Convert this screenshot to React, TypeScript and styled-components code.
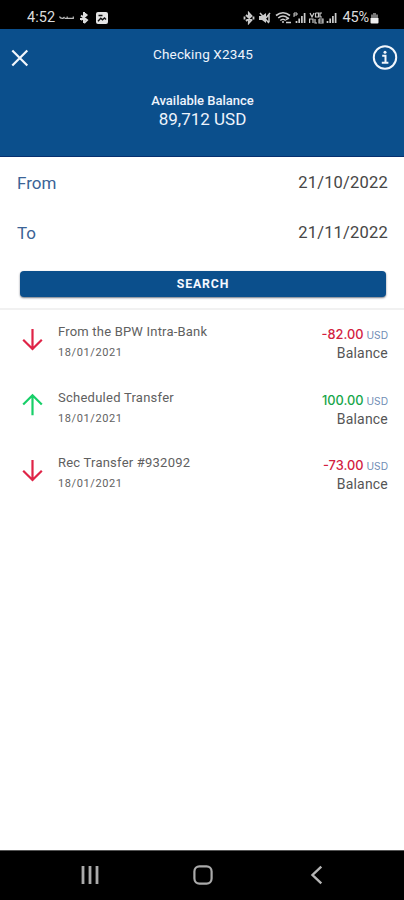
import React from "react";
import styled, { createGlobalStyle } from "styled-components";

const Global = createGlobalStyle`
  * { box-sizing: border-box; }
  body { margin: 0; background: #fff; font-family: Roboto, "Liberation Sans", sans-serif; }
`;

const Screen = styled.div`
  width: 404px;
  height: 900px;
  display: flex;
  flex-direction: column;
  overflow: hidden;
  background: #fff;
`;

const StatusBar = styled.div`
  height: 29px;
  flex: none;
  display: flex;
  justify-content: space-between;
  padding: 7px 25px 0 27px;
  background: #000;
  color: #dcdcdc;
`;

const StatusGroup = styled.div`
  display: flex;
  align-items: center;
  height: 21px;
`;

const StatusText = styled.span<{ $spacing: number }>`
  font-size: 14.5px;
  line-height: 20px;
  letter-spacing: ${(p) => p.$spacing}px;
`;

const Icon = styled.svg<{ $left?: number }>`
  display: block;
  flex: none;
  margin-left: ${(p) => p.$left ?? 0}px;
`;

const Header = styled.header`
  height: 128px;
  flex: none;
  background: #0b4f8c;
  border-bottom: 1px solid #06306f;
  color: #eef4fc;
`;

const TitleRow = styled.div`
  height: 58px;
  display: flex;
  justify-content: space-between;
  padding: 0 6px 0 11px;
`;

const IconButton = styled.button<{ $top: number }>`
  height: 26px;
  margin: ${(p) => p.$top}px 0 0;
  padding: 0;
  border: 0;
  background: none;
  color: inherit;
`;

const Title = styled.h1`
  margin: 15px 0 0 5px;
  font-size: 13.5px;
  line-height: 20px;
  font-weight: 400;
  letter-spacing: 0.15px;
`;

const BalanceBlock = styled.div`
  display: flex;
  flex-direction: column;
  align-items: center;
  padding: 5px 0 0 1px;
`;

const BalanceLabel = styled.div`
  font-size: 13px;
  line-height: 18px;
  font-weight: 500;
`;

const BalanceValue = styled.div`
  font-size: 17px;
  line-height: 19px;
`;

const Filters = styled.section`
  height: 153px;
  flex: none;
  padding-top: 1px;
  border-bottom: 2px solid #f1f1f1;
`;

const DateRow = styled.div`
  height: 50.5px;
  display: flex;
  align-items: center;
  justify-content: space-between;
  padding: 0 16px 0 17px;
`;

const DateLabel = styled.span`
  font-size: 17px;
  line-height: 20px;
  padding-bottom: 1px;
  color: #3b6396;
`;

const DateValue = styled.span`
  font-size: 16.5px;
  line-height: 20px;
  letter-spacing: 0.2px;
  padding-bottom: 1px;
  color: #464646;
`;

const SearchButton = styled.button`
  display: block;
  width: 366px;
  height: 26px;
  margin: 12px 0 0 20px;
  padding: 0 0 1px;
  border: 0;
  border-radius: 4px;
  background: #0b4f8c;
  box-shadow: 0 1px 2px rgba(20, 30, 50, 0.6);
  color: #f4f8ff;
  font: 700 12.3px/20px Roboto, sans-serif;
  letter-spacing: 0.85px;
`;

const List = styled.main`
  flex: 1;
  padding-top: 11px;
`;

const Row = styled.div`
  height: 65.5px;
  display: flex;
  padding: 0 16px 0 22px;
`;

const Details = styled.div`
  flex: 1;
  margin-left: 15px;
`;

const Name = styled.div<{ $spacing: number }>`
  font-size: 13px;
  line-height: 22px;
  letter-spacing: ${(p) => p.$spacing}px;
  color: #606060;
`;

const Posted = styled.div`
  font-size: 11px;
  line-height: 20px;
  letter-spacing: 0.6px;
  color: #626262;
`;

const Figures = styled.div`
  padding-top: 5px;
  text-align: right;
`;

const Amount = styled.div<{ $credit: boolean }>`
  height: 18px;
  font-family: Inter, Roboto, sans-serif;
  font-size: 12.8px;
  line-height: 18px;
  font-weight: 500;
  color: ${(p) => (p.$credit ? "#18a64a" : "#d3213f")};
`;

const Currency = styled.span`
  margin-left: 3px;
  font-size: 10.2px;
  font-weight: 400;
  color: #6f8db5;
`;

const BalanceNote = styled.div`
  font-size: 14px;
  line-height: 18px;
  letter-spacing: 0.2px;
  color: #555;
`;

const NavBar = styled.nav`
  height: 50px;
  flex: none;
  display: flex;
  align-items: center;
  justify-content: space-between;
  padding: 0 81px 2px 80px;
  border-top: 1px solid #555;
  background: #000;
`;

const HomeIcon = styled(Icon)`
  margin-right: 5px;
`;

interface Transaction {
  name: string;
  date: string;
  amount: string;
  credit: boolean;
  spacing: number;
}

const transactions: Transaction[] = [
  { name: "From the BPW Intra-Bank", date: "18/01/2021", amount: "-82.00", credit: false, spacing: 0.2 },
  { name: "Scheduled Transfer", date: "18/01/2021", amount: "100.00", credit: true, spacing: 0.25 },
  { name: "Rec Transfer #932092", date: "18/01/2021", amount: "-73.00", credit: false, spacing: 0.22 },
];

const Bars = ({ x }: { x: number }) => (
  <path d={`M${x} 12V10M${x + 2.7} 12V7.5M${x + 5.4} 12V5M${x + 8.1} 12V2`} stroke="#ccc" strokeWidth="1.7" />
);

const DirectionArrow = ({ credit }: { credit: boolean }) => (
  <Icon width="21" height="42" viewBox="0 0 21 42" fill="none" stroke={credit ? "#18cf69" : "#df2447"} strokeWidth="2.2">
    {credit ? <path d="M10.5 28.3V8.3M1.2 17.5L10.5 8.3L19.8 17.5" /> : <path d="M10.5 8V28M1.2 18.7L10.5 28L19.8 18.7" />}
  </Icon>
);

export default function App() {
  return (
    <>
      <Global />
      <Screen>
        <StatusBar>
          <StatusGroup>
            <StatusText $spacing={0.1}>4:52</StatusText>
            <Icon $left={4} width="15" height="14" viewBox="0 0 15 14" fill="none" stroke="#bbb" strokeWidth="1.2">
              <path d="M0.5 5.5Q1 7.5 4 7.3L5.5 6M5.5 7.4h4.5M8.2 5.5v2M10 7.3h4.3V5.5" />
            </Icon>
            <Icon $left={5} width="10" height="14" viewBox="0 0 10 14" fill="none" stroke="#ddd" strokeWidth="2">
              <path d="M5 1v11M2 4.5L8 9L5 12M5 2L7.5 4L2 9M1 8h4" />
            </Icon>
            <Icon $left={7} width="12" height="14" viewBox="0 0 12 14">
              <rect y="1" width="12" height="12" rx="2" fill="#e5e5e5" />
              <path d="M2 10.2L4.8 7.2L6.5 8.7L8.5 7L10 8.5M2.5 4.5h4" fill="none" stroke="#111" strokeWidth="1.4" />
            </Icon>
          </StatusGroup>
          <StatusGroup>
            <Icon width="12" height="14" viewBox="0 0 12 14" fill="none" stroke="#ccc" strokeWidth="1.8">
              <path d="M3 4L8.5 9L5.8 12V2L8.5 5L3 10M1.5 5.5v3M10.5 5.5v3" />
            </Icon>
            <Icon $left={3} width="13" height="14" viewBox="0 0 13 14">
              <path d="M1 5h3l4-3v10L4 9H1z" fill="#ccc" />
              <path d="M2 2l9 10M11 3v8M8 7l4-5" stroke="#ccc" strokeWidth="1.5" />
            </Icon>
            <Icon $left={4} width="17" height="14" viewBox="0 0 17 14" fill="none" stroke="#ccc" strokeWidth="1.6">
              <path d="M1 4.5Q8 -1 15 4.5M3.2 7Q8 3 12.8 7M5.3 9.5Q8 7 10.7 9.5M7 11h2M11 8.5l3-1.5M11 11.5h5" />
            </Icon>
            <Icon $left={1} width="13" height="14" viewBox="0 0 13 14">
              <Bars x={3.5} />
              <path d="M1 6V2h3v2H1" fill="none" stroke="#ccc" />
            </Icon>
            <Icon $left={3} width="15" height="14" viewBox="0 0 15 14" fill="none" stroke="#ccc" strokeWidth="1.2">
              <path d="M1 2l2 4 2-4M6.5 2v4h3V2h-3M13 2h-2v4h2M0.6 12V8h3.4v4M6 8v4h2M10 8v4h4V8h-4M10 10h4" />
            </Icon>
            <Icon $left={2} width="12" height="14" viewBox="0 0 12 14">
              <Bars x={1.5} />
            </Icon>
            <Icon width="5" height="14" />
            <StatusText $spacing={-0.15}>45%</StatusText>
            <Icon $left={1} width="9" height="14" viewBox="0 0 9 14">
              <path d="M3 2h3v1.5h2V7H1V3.5h2z" fill="#777" />
              <path d="M0.5 7h8v4.5q0 1-1 1h-6q-1 0-1-1z" fill="#eee" />
            </Icon>
          </StatusGroup>
        </StatusBar>

        <Header>
          <TitleRow>
            <IconButton $top={16} aria-label="Close">
              <Icon width="18" height="26" viewBox="0 0 18 26" fill="none" stroke="#f2f6fc" strokeWidth="2.2">
                <path d="M1.3 5.5L16.3 20.5M16.3 5.5L1.3 20.5" />
              </Icon>
            </IconButton>
            <Title>Checking X2345</Title>
            <IconButton $top={15} aria-label="Information">
              <Icon width="26" height="26" viewBox="0 0 26 26" fill="none" stroke="#f2f6fc" strokeWidth="2">
                <circle cx="13" cy="13.5" r="11.2" />
                <path d="M10.2 11.7h3.3v6.8M9.8 18.7h6.6" />
                <circle cx="13" cy="8.2" r="1.5" fill="#f2f6fc" stroke="none" />
              </Icon>
            </IconButton>
          </TitleRow>
          <BalanceBlock>
            <BalanceLabel>Available Balance</BalanceLabel>
            <BalanceValue>89,712 USD</BalanceValue>
          </BalanceBlock>
        </Header>

        <Filters>
          <DateRow>
            <DateLabel>From</DateLabel>
            <DateValue>21/10/2022</DateValue>
          </DateRow>
          <DateRow>
            <DateLabel>To</DateLabel>
            <DateValue>21/11/2022</DateValue>
          </DateRow>
          <SearchButton>SEARCH</SearchButton>
        </Filters>

        <List>
          {transactions.map((t) => (
            <Row key={t.name}>
              <DirectionArrow credit={t.credit} />
              <Details>
                <Name $spacing={t.spacing}>{t.name}</Name>
                <Posted>{t.date}</Posted>
              </Details>
              <Figures>
                <Amount $credit={t.credit}>
                  {t.amount}
                  <Currency>USD</Currency>
                </Amount>
                <BalanceNote>Balance</BalanceNote>
              </Figures>
            </Row>
          ))}
        </List>

        <NavBar>
          <Icon width="20" height="20" viewBox="0 0 20 20" stroke="#aaa" strokeWidth="2.8">
            <path d="M3 1v18M10 1v18M17 1v18" />
          </Icon>
          <HomeIcon width="20" height="20" viewBox="0 0 20 20" fill="none" stroke="#aaa" strokeWidth="2.2">
            <rect x="1.4" y="1.4" width="17.2" height="17.2" rx="5" />
          </HomeIcon>
          <Icon width="13" height="20" viewBox="0 0 13 20" fill="none" stroke="#b5b5b5" strokeWidth="2.4">
            <path d="M11.3 1.6L2.5 10L11.3 18.4" />
          </Icon>
        </NavBar>
      </Screen>
    </>
  );
}
